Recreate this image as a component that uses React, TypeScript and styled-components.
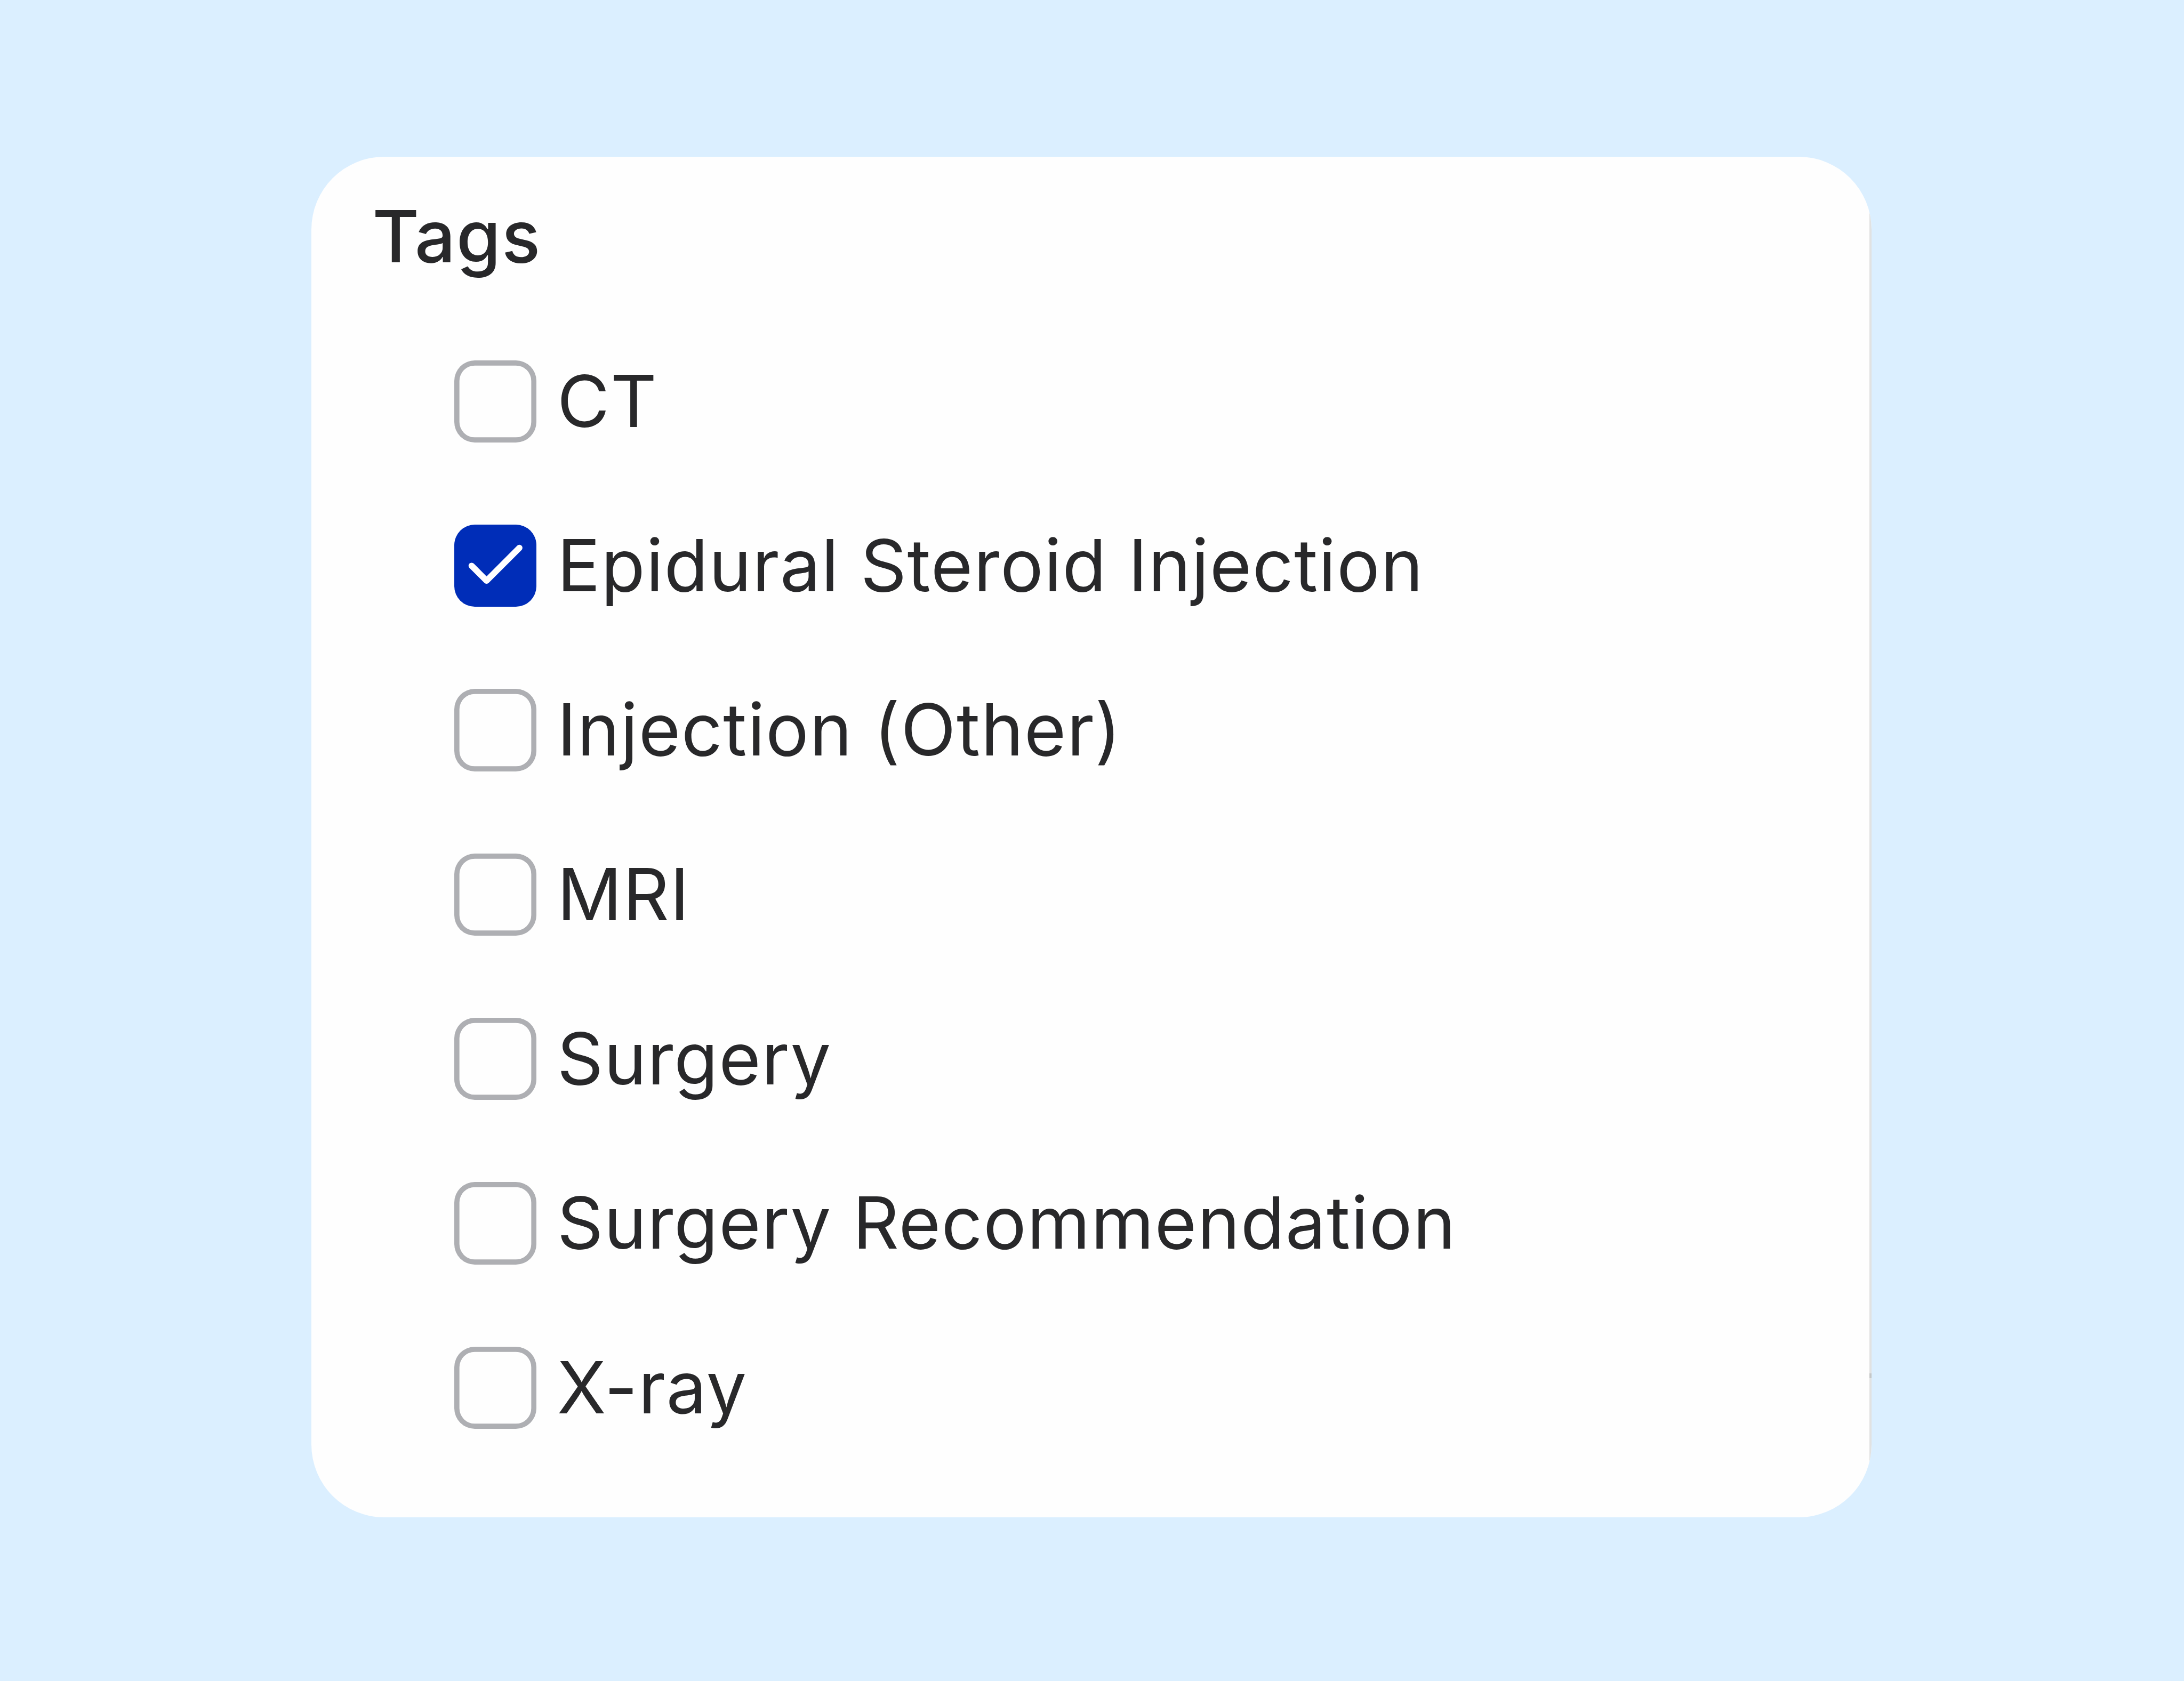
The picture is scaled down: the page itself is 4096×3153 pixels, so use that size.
import React, { useState } from 'react';
import styled, { createGlobalStyle } from 'styled-components';

const GlobalStyle = createGlobalStyle`
  *, *::before, *::after { box-sizing: border-box; }
  body { margin: 0; background: #dbefff; }
`;

const Page = styled.main`
  width: 4096px;
  height: 3153px;
  padding: 294.3px 0 0 584.2px;
  overflow: hidden;
  background: #dbefff;
  color: #28282a;
  font-family: Inter, "Liberation Sans", sans-serif;
  font-size: 134.9px;
`;

const Card = styled.section`
  display: flex;
  width: 2925.4px;
  height: 2551.4px;
  overflow: hidden;
  border-radius: 136.6px;
  background: #fefefe;
`;

const Content = styled.div`
  flex: 1;
  padding: 82px 0 0 114px;
`;

const Edge = styled.div`
  width: 3.9px;
  padding-top: 2281.4px;
  background: #e1e2e2;
`;

const EdgeTick = styled.div`
  height: 9.7px;
  background: #c5c7c7;
`;

const Heading = styled.h2`
  margin: 0 0 164.4px;
  font-size: inherit;
  font-weight: 500;
  line-height: 134.9px;
  letter-spacing: 1.445px;
`;

const TagList = styled.ul`
  display: flex;
  flex-direction: column;
  gap: 154.2px;
  margin: 0;
  padding: 0 0 0 153.9px;
  list-style: none;
`;

const TagRow = styled.li`
  display: flex;
  align-items: flex-start;
  gap: 38.6px;
  height: 154.2px;
  cursor: pointer;
`;

const Checkbox = styled.span<{ $checked: boolean }>`
  display: flex;
  flex: none;
  width: 154.2px;
  height: 154.2px;
  border-radius: 38.5px;
  background: ${p => (p.$checked ? '#002db8' : 'transparent')};
  box-shadow: ${p => (p.$checked ? 'none' : 'inset 0 0 0 9.64px #aeafb3')};
`;

const CheckIcon = styled.svg`
  width: 100%;
  height: 100%;
  fill: none;
  stroke: #fff;
  stroke-width: 1.2;
  stroke-linecap: round;
  stroke-linejoin: round;
`;

const TagName = styled.span`
  line-height: 152.8px;
  letter-spacing: 1.445px;
  white-space: nowrap;
`;

const TAGS = [
  'CT',
  'Epidural Steroid Injection',
  'Injection (Other)',
  'MRI',
  'Surgery',
  'Surgery Recommendation',
  'X-ray',
];

export default function App() {
  const [selected, setSelected] = useState<string[]>(['Epidural Steroid Injection']);
  const toggle = (tag: string) =>
    setSelected(s => (s.includes(tag) ? s.filter(t => t !== tag) : [...s, tag]));

  return (
    <>
      <GlobalStyle />
      <Page>
        <Card>
          <Content>
            <Heading>Tags</Heading>
            <TagList>
              {TAGS.map(tag => {
                const checked = selected.includes(tag);
                return (
                  <TagRow key={tag} onClick={() => toggle(tag)}>
                    <Checkbox role="checkbox" aria-checked={checked} $checked={checked}>
                      {checked && (
                        <CheckIcon viewBox="0 0 16 16">
                          <path d="M3.37 8.01 6.28 10.92 12.67 4.52" />
                        </CheckIcon>
                      )}
                    </Checkbox>
                    <TagName>{tag}</TagName>
                  </TagRow>
                );
              })}
            </TagList>
          </Content>
          <Edge>
            <EdgeTick />
          </Edge>
        </Card>
      </Page>
    </>
  );
}
